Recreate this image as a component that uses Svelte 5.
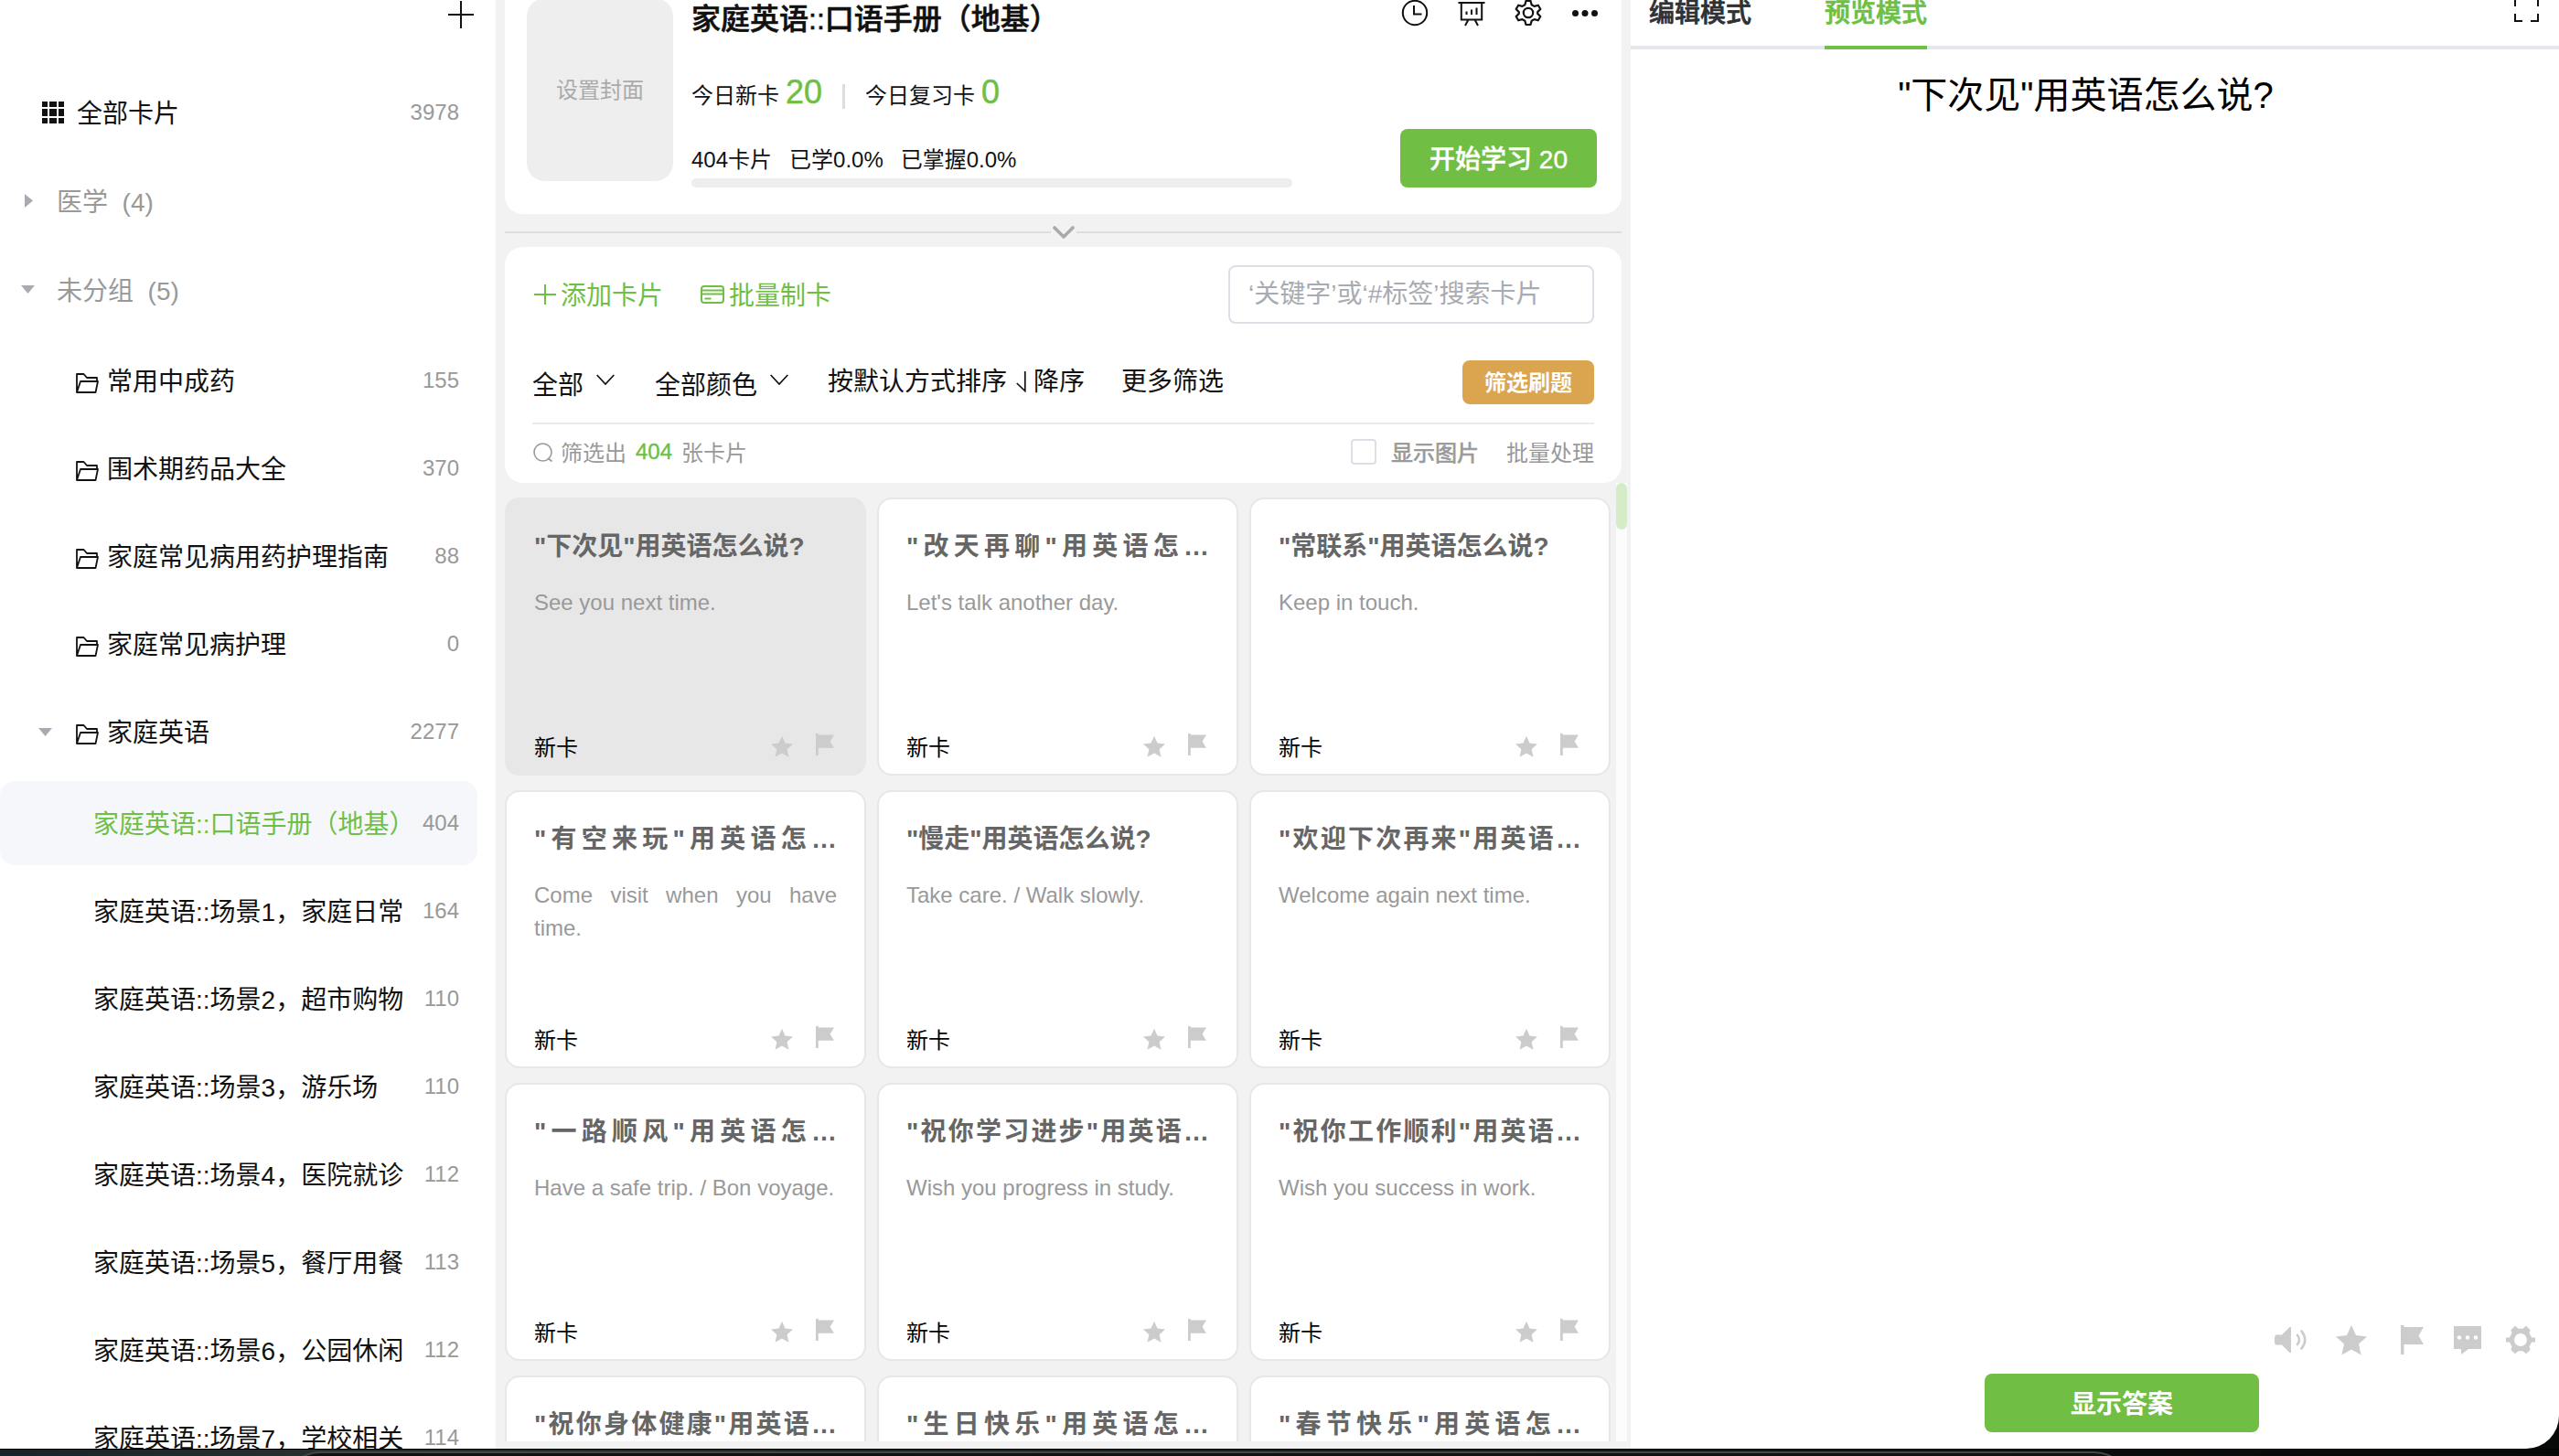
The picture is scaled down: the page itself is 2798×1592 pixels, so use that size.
<script>
  const folders = [
    { name: '常用中成药', count: 155 },
    { name: '围术期药品大全', count: 370 },
    { name: '家庭常见病用药护理指南', count: 88 },
    { name: '家庭常见病护理', count: 0 },
    { name: '家庭英语', count: 2277, open: true },
  ];
  const decks = [
    { name: '家庭英语::口语手册（地基）', count: 404, active: true },
    { name: '家庭英语::场景1，家庭日常', count: 164 },
    { name: '家庭英语::场景2，超市购物', count: 110 },
    { name: '家庭英语::场景3，游乐场', count: 110 },
    { name: '家庭英语::场景4，医院就诊', count: 112 },
    { name: '家庭英语::场景5，餐厅用餐', count: 113 },
    { name: '家庭英语::场景6，公园休闲', count: 112 },
    { name: '家庭英语::场景7，学校相关', count: 114 },
  ];
  const cards = [
    { title: '"下次见"用英语怎么说?', text: 'See you next time.', active: true },
    { title: '"改天再聊"用英语怎…', text: "Let's talk another day.", cut: true },
    { title: '"常联系"用英语怎么说?', text: 'Keep in touch.' },
    { title: '"有空来玩"用英语怎…', text: 'Come visit when you have time.', cut: true },
    { title: '"慢走"用英语怎么说?', text: 'Take care. / Walk slowly.' },
    { title: '"欢迎下次再来"用英语…', text: 'Welcome again next time.', cut: true },
    { title: '"一路顺风"用英语怎…', text: 'Have a safe trip. / Bon voyage.', cut: true },
    { title: '"祝你学习进步"用英语…', text: 'Wish you progress in study.', cut: true },
    { title: '"祝你工作顺利"用英语…', text: 'Wish you success in work.', cut: true },
  ];
  const lastRow = ['"祝你身体健康"用英语…', '"生日快乐"用英语怎…', '"春节快乐"用英语怎…'];
</script>

{#snippet star(size)}
  <svg width={size} height={size} viewBox="0 0 34 34"><path fill="#ccc" d="M17 1l5 11 12 1.400-9 8.200 2.600 12L17 27.500 6.400 33.600 9 21.600 0 13.400 12 12z" /></svg>
{/snippet}

{#snippet flag(w, h)}
  <svg width={w} height={h} viewBox="0 0 25 32" preserveAspectRatio="none"><path fill="#ccc" d="M0 0h3.500v2H25l-5.500 9.500L25 21H3.500v11H0z" /></svg>
{/snippet}

<div class="screen">
  <div class="window">
    <aside class="sidebar">
      <div class="side-top">
        <svg width="28" height="30" viewBox="0 0 28 30"><path d="M14 0v30M0 15h28" stroke="#111" stroke-width="2" /></svg>
      </div>
      <div class="row all">
        <svg width="24" height="24" viewBox="0 0 24 24" fill="#111">
          <path d="M0 0h6v6H0zM8 0h8v6H8zM18 0h6v6h-6zM0 8h6v8H0zM8 8h8v8H8zM18 8h6v8h-6zM0 18h6v6H0zM8 18h8v6H8zM18 18h6v6h-6z" />
        </svg>
        <span class="name">全部卡片</span><span class="count">3978</span>
      </div>
      <div class="row group closed">
        <svg width="9" height="15" viewBox="0 0 9 15"><path d="M0 0l9 7.500L0 15z" fill="#a8abb2" /></svg>
        <span class="name">医学&nbsp; (4)</span>
      </div>
      <div class="row group">
        <svg width="15" height="9" viewBox="0 0 15 9"><path d="M0 0h15L7.500 9z" fill="#a8abb2" /></svg>
        <span class="name">未分组&nbsp; (5)</span>
      </div>
      <div class="folders">
        {#each folders as f}
          <div class="row folder">
            <span class="caret">
              {#if f.open}<svg width="15" height="9" viewBox="0 0 15 9"><path d="M0 0h15L7.500 9z" fill="#a8abb2" /></svg>{/if}
            </span>
            <svg class="ficon" width="25" height="22" viewBox="0 0 25 22" fill="none" stroke="#111" stroke-width="1.800">
              <path d="M1 21V1h7.500l3.500 4h11v4M1 21L5 9h19l-2.500 12z" stroke-linejoin="round" />
            </svg>
            <span class="name">{f.name}</span><span class="count">{f.count}</span>
          </div>
        {/each}
      </div>
      {#each decks as d}
        <div class="row deck" class:active={d.active}>
          <span class="name">{d.name}</span><span class="count">{d.count}</span>
        </div>
      {/each}
    </aside>

    <main class="center">
      <section class="summary">
        <div class="cover">设置封面</div>
        <div class="info">
          <h1>家庭英语::口语手册（地基）</h1>
          <div class="today">
            <span>今日新卡</span><b>20</b><i></i><span>今日复习卡</span><b>0</b>
          </div>
          <div class="progress-text"><span>404卡片</span><span>已学0.0%</span><span>已掌握0.0%</span></div>
          <div class="bar"></div>
        </div>
        <div class="side">
          <div class="tools">
            <svg width="30" height="30" viewBox="0 0 30 30" fill="none" stroke="#111" stroke-width="2"><circle cx="15" cy="14" r="13.200" /><path d="M14 6v9.500h8.500" /></svg>
            <svg width="30" height="30" viewBox="0 0 30 30" fill="none" stroke="#111" stroke-width="2"><path d="M.5 3h29M3.800 3v18.500h22.400V3M11.500 21.500L8 28M18.500 21.500L22 28M9.500 12.500v3.500M15 10.500V16M20.500 8.500V16" /></svg>
            <svg width="30" height="30" viewBox="0 0 30 30" fill="none" stroke="#111" stroke-width="2.200" stroke-linejoin="round"><path d="M12.500 1h5l1.200 4.200 2.900 1.700 4.200-1.200 2.500 4.300-3.100 3.100v1.800l3.100 3.100-2.500 4.300-4.200-1.200-2.900 1.700L17.500 27h-5l-1.200-4.200-2.900-1.700-4.200 1.200L1.700 18l3.100-3.100v-1.800L1.700 10l2.500-4.300 4.200 1.200 2.900-1.700z" /><circle cx="15" cy="14" r="5.200" /></svg>
            <svg width="30" height="30" viewBox="0 0 30 30" fill="#111"><circle cx="4.500" cy="14.500" r="3.500" /><circle cx="15" cy="14.500" r="3.500" /><circle cx="25.500" cy="14.500" r="3.500" /></svg>
          </div>
          <button class="start">开始学习 20</button>
        </div>
      </section>

      <div class="fold">
        <span></span>
        <svg width="24" height="14" viewBox="0 0 24 14"><path d="M2 2l10 10L22 2" fill="none" stroke="#aaa" stroke-width="3.600" stroke-linecap="round" stroke-linejoin="round" /></svg>
        <span></span>
      </div>

      <section class="filters">
        <div class="actions">
          <div class="action add">
            <svg width="24" height="24" viewBox="0 0 24 24"><path d="M12 1v22M0 12h24" stroke="#6fbf44" stroke-width="2" /></svg><span>添加卡片</span>
          </div>
          <div class="action">
            <svg width="26" height="20" viewBox="0 0 26 20" fill="none" stroke="#6fbf44" stroke-width="2"><rect x="1" y="1" width="24" height="18" rx="3" /><path d="M1 5.500h24M1 9.500h24M4.500 14.500h7" /></svg><span>批量制卡</span>
          </div>
          <div class="search">‘关键字’或‘#标签’搜索卡片</div>
        </div>
        <div class="options">
          <span class="drop">全部<svg width="20" height="12" viewBox="0 0 20 12"><path d="M.7 1l9.300 10L19.300 1" fill="none" stroke="#111" stroke-width="1.700" /></svg></span>
          <span class="drop second">全部颜色<svg width="20" height="12" viewBox="0 0 20 12"><path d="M.7 1l9.300 10L19.300 1" fill="none" stroke="#111" stroke-width="1.700" /></svg></span>
          <span class="order">按默认方式排序<svg width="11" height="24" viewBox="0 0 11 24"><path d="M9.800 1v21.500L.8 14" fill="none" stroke="#111" stroke-width="1.700" /></svg>降序</span>
          <span>更多筛选</span>
          <button class="quiz">筛选刷题</button>
        </div>
        <div class="result">
          <svg width="22" height="22" viewBox="0 0 22 22" fill="none" stroke="#999" stroke-width="1.600"><circle cx="10.500" cy="10.500" r="9.500" /><path d="M16 17l4.500 3.500" /></svg>
          <span>筛选出</span><em>404</em><span>张卡片</span>
          <span class="check"></span><span class="pic">显示图片</span><span class="batch">批量处理</span>
        </div>
      </section>

      <div class="list">
        <div class="grid">
          {#each cards as c}
            <article class:active={c.active}>
              <h2 class:cut={c.cut}>{c.title}</h2>
              <p>{c.text}</p>
              <footer>
                <span>新卡</span>
                {@render star(24)}
                {@render flag(20, 24)}
              </footer>
            </article>
          {/each}
          {#each lastRow as title}
            <article class="partial"><h2 class="cut">{title}</h2></article>
          {/each}
        </div>
        <div class="track"><div class="thumb"></div></div>
      </div>
    </main>

    <section class="preview">
      <nav>
        <span class="tab">编辑模式</span>
        <span class="tab on">预览模式</span>
        <svg width="27" height="27" viewBox="0 0 27 27" fill="none" stroke="#111" stroke-width="2"><path d="M8 1H1v8M19 1h7v8M1 17v8h8M26 17v8h-8" /></svg>
      </nav>
      <div class="question">"下次见"用英语怎么说?</div>
      <div class="marks">
        <svg class="m1" width="35" height="30" viewBox="0 0 35 30"><path fill="#ccc" d="M18 1v28h-1.500L8 20.500H2.500Q0 20.500 0 17v-4q0-3.500 2.500-3.500H8L16.500 1z" /><path fill="none" stroke="#ccc" stroke-width="2.600" stroke-linecap="round" d="M25 10q4 5 0 10M29.500 5.500q7.500 9.500 0 19" /></svg>
        <span class="m2">{@render star(34)}</span>
        <span class="m3">{@render flag(25, 32)}</span>
        <svg class="m4" width="30" height="32" viewBox="0 0 30 32"><path fill="#ccc" d="M0 1h30v25H16l-8 6v-6H0z" /><g fill="#fff"><circle cx="6" cy="13.500" r="2.200" /><circle cx="15" cy="13.500" r="2.200" /><circle cx="24" cy="13.500" r="2.200" /></g></svg>
        <svg width="32" height="32" viewBox="0 0 32 32"><path fill="#ccc" fill-rule="evenodd" d="M5.500 5L10 .8l3.500 3h5l3.500-3L26.500 5l-1 3.500 2.500 5h4v5h-4l-2.500 5 1 3.500-4.500 4.200-3.500-3h-5l-3.500 3L5.500 27l1-3.500-2.500-5H0v-5h4l2.500-5zM16 9a7 7 0 1 0 0 14 7 7 0 0 0 0-14z" /></svg>
      </div>
      <button class="answer">显示答案</button>
    </section>
  </div>
  <div class="desk"><div class="dock"></div></div>
</div>

<style>
  :global(body) {
    margin: 0;
    background: #0b0e0e;
  }
  .screen {
    width: 2798px;
    height: 1592px;
    overflow: hidden;
    background: #070909;
    font-family: 'Liberation Sans', 'Noto Sans CJK SC', sans-serif;
    font-size: 28px;
    color: #111;
  }
  .screen * {
    box-sizing: border-box;
  }
  svg {
    display: block;
    flex: none;
  }
  .window {
    display: flex;
    height: 1584px;
    overflow: hidden;
    background: #fff;
    border-radius: 0 0 36px 0;
    white-space: nowrap;
  }
  .desk {
    height: 8px;
    padding: 2px 468px 0 310px;
    border-top: 1px solid #000;
    background: linear-gradient(90deg, #16242b 0, #26302f 340px, #0a0d0d 2300px, #070909);
    overflow: hidden;
  }
  .dock {
    height: 40px;
    border-top: 2px solid #3f4a48;
    border-radius: 40px 40px 0 0;
    background: #111;
  }
  button {
    border: 0;
    padding: 0 0 3px;
    color: #fff;
    font: 500 28px 'Liberation Sans', 'Noto Sans CJK SC', sans-serif;
    background: #70be44;
    border-radius: 8px;
  }

  /* Sidebar */
  .sidebar {
    width: 542px;
    flex: none;
  }
  .side-top {
    height: 75px;
    padding: 1px 24px 0 0;
    display: flex;
    justify-content: flex-end;
  }
  .row {
    height: 96px;
    display: flex;
    align-items: center;
    padding-right: 40px;
  }
  .name {
    margin: -3px 0 0 -1px;
  }
  .count {
    margin-left: auto;
    font-size: 24px;
    color: #999;
  }
  .all {
    padding-left: 46px;
    gap: 15px;
  }
  .group {
    padding-left: 23px;
    gap: 25px;
    color: #999;
  }
  .group svg {
    margin-top: -2px;
  }
  .group.closed {
    height: 98px;
    padding-left: 27px;
    gap: 27px;
  }
  .folders {
    padding: 3px 0 6px;
  }
  .caret {
    width: 41px;
    margin-left: 42px;
  }
  .ficon {
    margin: 5px 10px 0 0;
  }
  .deck {
    padding-left: 103px;
  }
  .deck.active {
    height: 92px;
    width: 522px;
    margin-bottom: 2px;
    padding-right: 20px;
    border-radius: 16px;
    background: #f5f7fb;
  }
  .deck.active .name {
    color: #6fbf44;
  }

  /* Deck overview */
  .center {
    width: 1241px;
    flex: none;
    padding-left: 10px;
    background: #f2f2f2;
  }
  .summary {
    width: 1221px;
    height: 234px;
    display: flex;
    padding: 0 27px 0 24px;
    background: #fff;
    border-radius: 0 0 20px 20px;
  }
  .cover {
    width: 160px;
    height: 200px;
    margin-top: -2px;
    border-radius: 20px;
    background: #eee;
    color: #aaa;
    font-size: 24px;
    line-height: 201px;
    text-align: center;
  }
  .info {
    width: 657px;
    margin-left: 20px;
  }
  h1 {
    margin: 0;
    height: 40px;
    font-size: 32px;
    font-weight: 500;
    line-height: 42px;
    -webkit-text-stroke: 0.6px #111;
  }
  .today {
    display: flex;
    align-items: baseline;
    height: 60px;
    margin-top: 38px;
    margin-bottom: 2px;
    font-size: 24px;
    line-height: 46px;
  }
  .today b {
    margin-left: 7px;
    font-size: 36px;
    font-weight: 400;
    color: #6fbf44;
    -webkit-text-stroke: 0.5px #6fbf44;
  }
  .today i {
    width: 3px;
    height: 27px;
    margin: 14px 22px 0;
    align-self: flex-start;
    background: #ddd;
  }
  .progress-text {
    display: flex;
    gap: 19px;
    height: 55px;
    font-size: 24px;
    line-height: 69px;
  }
  .bar {
    height: 10px;
    border-radius: 5px;
    background: #eee;
  }
  .side {
    margin-left: auto;
    display: flex;
    flex-direction: column;
    align-items: flex-end;
  }
  .tools {
    display: flex;
    gap: 32px;
    height: 141px;
    margin-right: -2px;
  }
  .start {
    width: 215px;
    height: 64px;
    -webkit-text-stroke: 0.4px #fff;
  }
  .fold {
    width: 1221px;
    height: 36px;
    padding-top: 3px;
    display: flex;
    align-items: center;
    gap: 2px;
  }
  .fold span {
    flex: 1;
    height: 2px;
    background: #dcdde3;
  }

  /* Filters */
  .filters {
    width: 1221px;
    height: 258px;
    padding: 20px 30px 0;
    background: #fff;
    border-radius: 20px;
  }
  .actions {
    display: flex;
    align-items: center;
    height: 64px;
    color: #6fbf44;
  }
  .action {
    display: flex;
    align-items: center;
    gap: 5px;
  }
  .action span {
    margin-top: -2px;
  }
  .add {
    padding-left: 2px;
    margin-right: 41px;
    gap: 5px;
  }
  .search {
    width: 400px;
    height: 64px;
    margin-left: auto;
    padding-left: 20px;
    border: 2px solid #dcdfe6;
    border-radius: 8px;
    color: #a8abb2;
    line-height: 59px;
  }
  .options {
    display: flex;
    align-items: center;
    height: 110px;
    padding-top: 13px;
    margin-bottom: 2px;
    border-bottom: 2px solid #ebebeb;
  }
  .options span {
    display: flex;
    align-items: center;
  }
  .drop {
    gap: 14px;
    padding-top: 9px;
  }
  .drop svg {
    margin-top: -8px;
  }
  .drop.second {
    margin: 0 43px 0 44px;
  }
  .order {
    margin-right: 40px;
  }
  .order svg {
    margin: 4px 8px 0 10px;
  }
  .quiz {
    width: 144px;
    height: 48px;
    margin: 6px 0 0 auto;
    font-size: 24px;
    font-weight: 700;
    background: #dba550;
  }
  .result {
    display: flex;
    align-items: center;
    height: 56px;
    font-size: 24px;
    color: #999;
  }
  .result svg {
    margin: 2px 8px 0 1px;
  }
  .result span {
    margin-top: -2px;
  }
  .result em {
    margin: 0 10px;
    font-style: normal;
    color: #6fbf44;
    -webkit-text-stroke: 0.4px #6fbf44;
  }
  .result .check {
    width: 28px;
    height: 28px;
    margin: 0 0 0 auto;
    border: 2px solid #dcdfe6;
    border-radius: 4px;
  }
  .result .pic {
    margin: -2px 30px 0 16px;
    -webkit-text-stroke: 0.7px #999;
  }

  /* Card list */
  .list {
    display: flex;
    justify-content: space-between;
    height: 1048px;
    padding-right: 4px;
    overflow: hidden;
  }
  .grid {
    width: 1209px;
    display: grid;
    grid-template-columns: repeat(3, 1fr);
    grid-template-rows: repeat(3, 304px) 72px;
    gap: 16px 12px;
    padding-top: 16px;
  }
  article {
    display: flex;
    flex-direction: column;
    padding: 31px 30px 0;
    background: #fff;
    border: 2px solid #e6e6ec;
    border-radius: 16px;
  }
  article.active {
    background: #e7e7e7;
  }
  article.partial {
    border-bottom: 0;
    border-radius: 16px 16px 0 0;
  }
  h2 {
    margin: 0;
    height: 42px;
    font-size: 28px;
    line-height: 42px;
    color: #666;
  }
  .partial h2 {
    height: 39px;
  }
  .cut {
    text-align-last: justify;
    white-space: normal;
  }
  p {
    flex: 1;
    margin: 22px 0 0;
    font-size: 24px;
    line-height: 36px;
    color: #999;
    text-align: justify;
    white-space: normal;
  }
  footer {
    display: flex;
    align-items: center;
    height: 60px;
    font-size: 24px;
    color: #000;
  }
  footer span {
    margin: -1px auto 0 0;
  }
  footer svg + svg {
    margin: 0 3px 5px 25px;
  }
  .track {
    width: 12px;
    background: #fcfcfc;
  }
  .thumb {
    height: 51px;
    border-radius: 6px;
    background: #d4edc8;
  }

  /* Preview */
  .preview {
    flex: 1;
    display: flex;
    flex-direction: column;
  }
  nav {
    display: flex;
    height: 54px;
    padding: 0 22px 0 20px;
    border-bottom: 4px solid #e4e7ed;
    font-weight: 500;
    color: #303133;
    line-height: 30px;
  }
  nav svg {
    margin: -2px 0 0 auto;
  }
  .tab {
    height: 54px;
    margin-right: 80px;
    -webkit-text-stroke: 0.7px currentColor;
  }
  .on {
    color: #6fbf44;
    border-bottom: 4px solid #6fbf44;
  }
  .question {
    margin-right: 20px;
    font-size: 40px;
    line-height: 100px;
    text-align: center;
    color: #000;
  }
  .marks {
    display: flex;
    align-items: center;
    justify-content: flex-end;
    margin-top: auto;
    padding-right: 26px;
    height: 34px;
  }
  .m1 {
    margin-right: 32px;
  }
  .m2 {
    margin-right: 37px;
  }
  .m3 {
    margin-right: 33px;
  }
  .m4 {
    margin-right: 27px;
  }
  .answer {
    width: 300px;
    height: 64px;
    margin: 20px 0 18px 387px;
    font-weight: 700;
  }
</style>
